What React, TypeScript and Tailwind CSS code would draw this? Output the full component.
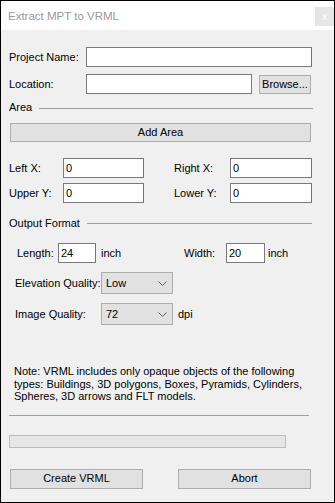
import React from 'react';

const font = "font-['Liberation_Sans',Arial,sans-serif]";

function TextBox({ w, value }: { w: string; value?: string }) {
  return (
    <div className={`${w} h-[20px] border border-[#7a7a7a] bg-white pl-[2px] flex items-center text-black`}>
      {value}
    </div>
  );
}

function Button({ w, h, label }: { w: string; h: string; label: string }) {
  return (
    <div className={`${w} ${h} border border-[#adadad] bg-[#e1e1e1] flex items-center justify-center text-black`}>
      {label}
    </div>
  );
}

function Combo({ value }: { value: string }) {
  return (
    <div className="w-[72px] h-[22px] border border-[#adadad] bg-[#e1e1e1] flex items-center justify-between pl-[4px] pr-[5px]">
      <span>{value}</span>
      <svg width="9" height="5" viewBox="0 0 9 5">
        <polyline points="0.5,0.5 4.5,4.5 8.5,0.5" fill="none" stroke="#606060" strokeWidth="1" />
      </svg>
    </div>
  );
}

export default function App() {
  return (
    <div className={`w-[335px] h-[503px] border border-black bg-[#f0f0f0] text-[11px] leading-[13px] text-black ${font} flex flex-col`}>
      {/* title bar */}
      <div className="h-[29px] bg-white flex justify-between">
        <span className="ml-[7px] mt-[9px] text-[11.5px] leading-[13px] text-[#9a9a9a]">Extract MPT to VRML</span>
        <div className="mt-[6px] w-[19px] h-[19px] bg-[#e6e6e6] flex items-center justify-center text-white text-[10px]">
          x
        </div>
      </div>

      <div className="flex flex-col">
        {/* project name */}
        <div className="mt-[17px] flex items-center">
          <span className="ml-[8px] w-[77px]">Project Name:</span>
          <TextBox w="w-[226px]" />
        </div>
        {/* location */}
        <div className="mt-[7px] flex items-center">
          <span className="ml-[8px] w-[77px]">Location:</span>
          <TextBox w="w-[166px]" />
          <div className="ml-[7px]">
            <Button w="w-[52px]" h="h-[19px]" label="Browse..." />
          </div>
        </div>
        {/* area group */}
        <div className="mt-[6px] h-[14px] flex items-center">
          <span className="ml-[8px] w-[30px]">Area</span>
          <div className="w-[274px] h-px bg-[#a0a0a0] mt-[2px]" />
        </div>
        <div className="mt-[9px] ml-[9px]">
          <Button w="w-[301px]" h="h-[19px]" label="Add Area" />
        </div>
        <div className="mt-[16px] flex items-center">
          <span className="ml-[8px] w-[54px]">Left X:</span>
          <TextBox w="w-[81px]" value="0" />
          <span className="ml-[30px] w-[56px]">Right X:</span>
          <TextBox w="w-[82px]" value="0" />
        </div>
        <div className="mt-[5px] flex items-center">
          <span className="ml-[8px] w-[54px]">Upper Y:</span>
          <TextBox w="w-[81px]" value="0" />
          <span className="ml-[30px] w-[56px]">Lower Y:</span>
          <TextBox w="w-[82px]" value="0" />
        </div>
        {/* output format group */}
        <div className="mt-[13px] h-[14px] flex items-center">
          <span className="ml-[8px] w-[78px]">Output Format</span>
          <div className="w-[225px] h-px bg-[#a0a0a0]" />
        </div>
        <div className="mt-[13px] flex items-center">
          <span className="ml-[16px] w-[41px]">Length:</span>
          <TextBox w="w-[38px]" value="24" />
          <span className="ml-[5px] w-[83px]">inch</span>
          <span className="w-[42px]">Width:</span>
          <TextBox w="w-[39px]" value="20" />
          <span className="ml-[3px]">inch</span>
        </div>
        <div className="mt-[9px] flex items-center">
          <span className="ml-[14px] w-[86px]">Elevation Quality:</span>
          <Combo value="Low" />
        </div>
        <div className="mt-[9px] flex items-center">
          <span className="ml-[14px] w-[86px]">Image Quality:</span>
          <Combo value="72" />
          <span className="ml-[5px]">dpi</span>
        </div>
        {/* note */}
        <p className="mt-[40px] ml-[13px] w-[300px] leading-[12.5px]">
          Note: VRML includes only opaque objects of the following types: Buildings, 3D polygons, Boxes, Pyramids, Cylinders,
          Spheres, 3D arrows and FLT models.
        </p>
        <div className="mt-[12px] ml-[8px] w-[300px] h-px bg-[#a0a0a0]" />
        {/* progress */}
        <div className="mt-[19px] ml-[8px] w-[277px] h-[13px] border border-[#bcbcbc] bg-[#e6e6e6]" />
        {/* actions */}
        <div className="mt-[21px] ml-[9px] flex gap-[35px]">
          <Button w="w-[133px]" h="h-[20px]" label="Create VRML" />
          <Button w="w-[133px]" h="h-[20px]" label="Abort" />
        </div>
      </div>
    </div>
  );
}
